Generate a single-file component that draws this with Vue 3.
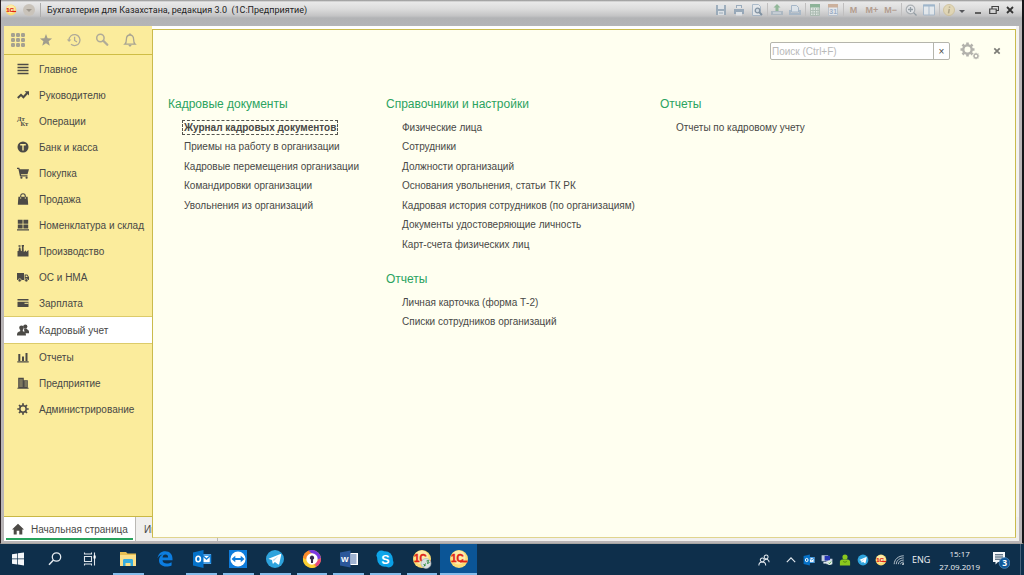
<script setup>
const tools = [
  { label: 'Меню функций', art: '<g fill="#a5a190"><rect x="1" y="1" width="4" height="4" rx="1.200"/><rect x="6" y="1" width="4" height="4" rx="1.200"/><rect x="11" y="1" width="4" height="4" rx="1.200"/><rect x="1" y="6" width="4" height="4" rx="1.200"/><rect x="6" y="6" width="4" height="4" rx="1.200"/><rect x="11" y="6" width="4" height="4" rx="1.200"/><rect x="1" y="11" width="4" height="4" rx="1.200"/><rect x="6" y="11" width="4" height="4" rx="1.200"/><rect x="11" y="11" width="4" height="4" rx="1.200"/></g>' },
  { label: 'Избранное', art: '<path fill="#a19d8d" d="M8 2l1.600 4.300 4.500.2-3.500 2.800 1.200 4.500L8 11.300l-3.800 2.500 1.200-4.500L1.900 6.500l4.500-.2z"/>' },
  { label: 'История', art: '<g fill="none" stroke="#b0ab98" stroke-width="1.300"><path d="M3 8.300A5.500 5.500 0 1 1 5 12.300"/><path d="M8.600 4.800v3.700l2.400 1.500"/></g><path fill="#b0ab98" d="M.8 7.400h4.600L3.100 10z"/>' },
  { label: 'Поиск', art: '<g fill="none" stroke="#b0ab98"><circle cx="6.400" cy="6" r="3.700" stroke-width="1.500"/><path d="M9.300 8.800l4 4" stroke-width="2.300" stroke-linecap="round"/></g>' },
  { label: 'Оповещения', art: '<path fill="none" stroke="#a8a492" stroke-width="1.300" d="M2.800 12.200h10.400c-1.400-1.300-1.600-2.300-1.600-5C11.600 4.500 10.200 3 8 3S4.400 4.500 4.400 7.200c0 2.700-.2 3.700-1.600 5z"/><path fill="#a8a492" d="M7.200 1.500h1.600V3H7.200zM6.500 13h3c-.2 1.200-.8 1.500-1.500 1.500S6.700 14.200 6.500 13z"/>' }
]

const sections = [
  { name: 'Главное', art: '<path d="M.5 1.500h11M.5 4.500h11M.5 7.500h11M.5 10.500h11" stroke="#4c4a46" stroke-width="1.300"/>' },
  { name: 'Руководителю', art: '<path d="M.8 9L4 5.800l2.400 2.400L10.200 4" fill="none" stroke="#4c4a46" stroke-width="2"/><path d="M7.600 2.200H12v4.400z"/>' },
  { name: 'Операции', art: '<text x="0" y="5.500" font-size="6.500" font-weight="700" font-family="Liberation Serif, serif">Дт</text><text x="3.500" y="11" font-size="6.500" font-weight="700" font-family="Liberation Serif, serif">Кт</text>' },
  { name: 'Банк и касса', art: '<circle cx="6" cy="6" r="5.500"/><path d="M3.200 3.800h5.600M6 4v5.500" stroke="#fbec9c" stroke-width="1.400"/>' },
  { name: 'Покупка', art: '<path d="M0 .8h2.300l.5 1.400H12l-1.500 5H4l.2 1h6.300v1.200H3L1.400 2H0z"/><circle cx="4.400" cy="10.700" r="1.100"/><circle cx="9.600" cy="10.700" r="1.100"/>' },
  { name: 'Продажа', art: '<path d="M1.400 3.800h9.200l.6 7.900H.8z"/><path d="M3.700 6V3.200C3.700 1.400 4.500.7 6 .7s2.300.7 2.300 2.500V6" fill="none" stroke="#4c4a46" stroke-width="1.100"/><path d="M3.700 4V6M8.300 4V6" stroke="#d8cb8c" stroke-width=".8"/>' },
  { name: 'Номенклатура и склад', art: '<path d="M.8.800h4.800v3.900H.8zM6.400.800h4.800v3.900H6.400zM.8 5.500h4.800v3.900H.8zM6.400 5.500h4.800v3.900H6.400zM0 10.200h12v1.400H0z"/>' },
  { name: 'Производство', art: '<path d="M.5 11.500V6h1l.4-3.500h1.500L4 6.200l.8-.4L5 1h1.500l.3 6L9 5.200V7l2.500-2v6.500z"/><path d="M1.500.2h2v1.500h-2zM4.700 0h2.300v1.500H4.700z"/>' },
  { name: 'ОС и НМА', art: '<path d="M0 2h7v7H0zM7.600 3.600h2.700L12 6v3H7.600z"/><path d="M8.600 4.500h1.300l.9 1.500H8.600z" fill="#fbec9c"/><circle cx="2.700" cy="9.300" r="1.600" stroke="#fbec9c" stroke-width=".6"/><circle cx="9.300" cy="9.300" r="1.600" stroke="#fbec9c" stroke-width=".6"/>' },
  { name: 'Зарплата', art: '<path d="M.5 2h11v1.600H.5zM.5 4.700h11V10H.5z"/><path d="M7.500 6.300h4" stroke="#fbec9c" stroke-width="1"/>' },
  { name: 'Кадровый учет', active: true, art: '<circle cx="8.300" cy="2.600" r="2.100"/><path d="M7 4.500h2.600c.2 1 2.400 1.300 2.400 3V9.300H7.500z"/><circle cx="4.500" cy="3.800" r="2.300"/><path d="M0 11.500C0 8.400.8 8.100 3.200 7.200V5h2.600v2.200c2.400.9 3.200 1.200 3.200 4.300z"/>' },
  { name: 'Отчеты', art: '<path d="M.3 10.300h11.400v1.200H.3zM1.300 3h2v7h-2zM5 5.500h2V10H5zM8.500 2h2v8h-2z"/>' },
  { name: 'Предприятие', art: '<path d="M1.200.8h5.600v2.400h4v7.600h.8v.9H.4v-.9h.8z"/><path d="M2.300 3h3.400M2.300 5h3.400M2.300 7h3.400M2.300 9h3.400M7.500 5h2.600M7.500 7h2.600M7.500 9h2.600" stroke="#d9cc8d" stroke-width=".7"/>' },
  { name: 'Администрирование', art: '<circle cx="6" cy="6" r="3.200" fill="none" stroke="#4c4a46" stroke-width="1.500"/><path d="M6 .3v2M6 9.700v2M.3 6h2M9.700 6h2M2 2l1.400 1.400M8.600 8.600L10 10M2 10l1.400-1.400M8.600 3.400L10 2" stroke="#4c4a46" stroke-width="1.700"/>' }
]

const columns = [
  [{ title: 'Кадровые документы', links: ['Журнал кадровых документов', 'Приемы на работу в организации', 'Кадровые перемещения организации', 'Командировки организации', 'Увольнения из организаций'] }],
  [
    { title: 'Справочники и настройки', links: ['Физические лица', 'Сотрудники', 'Должности организаций', 'Основания увольнения, статьи ТК РК', 'Кадровая история сотрудников (по организациям)', 'Документы удостоверяющие личность', 'Карт-счета физических лиц'] },
    { title: 'Отчеты', links: ['Личная карточка (форма Т-2)', 'Списки сотрудников организаций'] }
  ],
  [{ title: 'Отчеты', links: ['Отчеты по кадровому учету'] }]
]
const current = 'Журнал кадровых документов'

const commands = [
  [
    { label: 'Сохранить', art: '<path fill="#8fa3b5" d="M1 1h10v10H1z"/><path fill="#dfe5ea" d="M3 1h6v4H3zM3 7h6v4H3z"/><path fill="#8fa3b5" d="M4 8.500h4v1H4z"/>' },
    { label: 'Печать', art: '<path fill="#8a9fb3" d="M1 5h10v5H1zM3 1h6v3H3z"/><path fill="#e3e8ec" d="M3 8h6v3.500H3zM4 2h4v2H4z"/>' },
    { label: 'Просмотр', art: '<path fill="#e6eaee" stroke="#9fb2c4" d="M1.500.5h6l2 2v9h-8z"/><circle cx="6.500" cy="6.500" r="2.300" fill="#cfdae4" stroke="#6f8497" stroke-width="1.300"/><path d="M8 8l3 3" stroke="#6f8497" stroke-width="1.800"/>' }
  ],
  [
    { label: 'Загрузить', art: '<path fill="#a5b3bf" d="M0 7h12v4H0z"/><path fill="#7fae88" d="M6 0l3.500 3.500H7.500V7h-3V3.500h-2z"/><path fill="#e1e6ea" d="M2 8.500h8v1H2z"/>' },
    { label: 'Получить', art: '<path fill="#dde5ec" stroke="#98adc2" d="M2.500 1.500h5l2 2V8h-7z"/><path fill="#a1b4c6" d="M0 6h2v3h8V6h2v5H0z"/>' }
  ],
  [
    { label: 'Калькулятор', art: '<path fill="#dfe9e2" stroke="#a5b8ac" d="M1.500.5h9v11h-9z"/><path fill="#78a886" d="M1 0h10v3.500H1z"/><path stroke="#a5b8ac" d="M4 4v7M6.500 4v7M9 4v7M1 6.500h10M1 9h10"/>' },
    { label: 'Календарь', art: '<path fill="#e7ebef" stroke="#b5c0cc" d="M1.500 1.500h9v10h-9z"/><path fill="#c6a58c" d="M1 0h10v3.500H1z"/><text x="2.300" y="10.200" font-size="7" font-weight="700" fill="#8fa6c4" font-family="Liberation Sans, sans-serif">31</text>' }
  ],
  [{ label: 'M', text: 'M' }, { label: 'M+', text: 'M+' }, { label: 'M-', text: 'M−' }],
  [
    { label: 'Масштаб', art: '<circle cx="5.500" cy="5.500" r="4.300" fill="#e4e7ea" stroke="#a0a6ab" stroke-width="1.200"/><path stroke="#84919a" stroke-width="1.300" d="M3 5.500h5M5.500 3v5M8.600 8.600L11.500 11.500"/>' },
    { label: 'Окна', art: '<path fill="#e6ecf1" stroke="#9fb4c8" d="M.5 1h11v10H.5zM6 1v10"/><path fill="#8facc6" d="M0 .5h12v2H0z"/>' }
  ]
]

const oneC = '<circle cx="10" cy="10" r="9" fill="#fbdc74"/><circle cx="9.500" cy="8.500" r="7" fill="#fff0b5" opacity=".8"/><text x="2" y="13.200" font-size="10" font-weight="700" fill="#e02416" stroke="#e02416" stroke-width=".4" font-family="Liberation Sans, sans-serif">1С</text><path d="M11 12.500h7.500" stroke="#e02416" stroke-width="1.900"/>'
const telegram = '<circle cx="10" cy="10" r="9" fill="#2ea3dc"/><path fill="#fff" d="M3.600 9.800L15.400 5c.6-.2 1 .2.8.9l-2 9c-.2.7-.7.8-1.300.4l-3-2.200-1.500 1.500c-.4.3-.7.2-.8-.3l-.6-3.200-3.200-1z"/><path d="M7.500 11l6-4-4.500 5z" fill="#b9dcee"/>'
const outlook = '<path fill="#fff" d="M10 5h9v10h-9z"/><path d="M10 6h8.500v8H10" fill="none" stroke="#1683dc" stroke-width="1.500"/><path d="M11 7l3.500 3L18 7" fill="none" stroke="#1683dc" stroke-width="1.500"/><path fill="#0572c9" d="M1 3.500L11.500 1v18L1 16.500z"/><ellipse cx="6.200" cy="10" rx="2.200" ry="2.700" fill="none" stroke="#fff" stroke-width="1.600"/>'

const apps = [
  { label: 'Пуск', art: '<path fill="#f4f7fa" d="M4 5.200L9.300 4.400v5.100H4zM10 4.300l6-.9v6.100h-6zM4 10.300h5.300v5.200L4 14.700zM10 10.300h6v6.100l-6-.9z"/>' },
  { label: 'Поиск', art: '<circle cx="11.500" cy="8" r="4.200" fill="none" stroke="#e5ebf0" stroke-width="1.300"/><path d="M8.500 11L4 15.800" stroke="#e5ebf0" stroke-width="1.500"/>' },
  { label: 'Представление задач', art: '<g fill="none" stroke="#dfe6ec" stroke-width="1.100"><path d="M2.500 7.500h7v5h-7zM2.500 3.500V5h7V3.500M2.500 16.500V15h7v1.500M12.500 3.500v13"/></g><path fill="#fff" d="M11.500 6.500h2.200v3h-2.200z"/>' },
  { label: 'Проводник', open: true, art: '<path fill="#e8bf52" d="M2 3h6l1.500 1.500H18V17H2z"/><path fill="#fbe08a" d="M2 6h16v11H2z"/><path fill="#38aee0" d="M5 17v-5.500C5 10.500 5.500 10 6.500 10h7c1 0 1.500.5 1.500 1.500V17h-2.500v-3h-5v3z"/>' },
  { label: 'Edge', art: '<path fill="#0c7de0" d="M2.500 9.200C3.300 4.700 6.200 2.200 10.200 2.200c4.700 0 7.300 3.200 7.300 7.600v1.500H7.500c.2 2.300 2 3.300 4.300 3.300 1.800 0 3.400-.5 4.800-1.300v3.200c-1.600.8-3.300 1.100-5.300 1.100-4.400 0-7.300-2.400-7.300-6.300 0-2.600 1.400-4.600 3.700-5.800-2.600.3-4.200 1.700-5.200 3.700zm5.100-.8h5.500c0-1.900-.7-3-2.600-3S7.800 6.600 7.600 8.400z"/>' },
  { label: 'Outlook', open: true, art: outlook },
  { label: 'TeamViewer', open: true, art: '<rect x="1" y="1" width="18" height="18" fill="#0e7cdc"/><circle cx="10" cy="10" r="7.600" fill="#fff"/><path fill="#0e7cdc" d="M3.500 10L7.300 6.800V9h5.400V6.800l3.800 3.200-3.800 3.200V11H7.300v2.200z"/>' },
  { label: 'Telegram', open: true, art: telegram },
  { label: 'Браузер', open: true, art: '<circle cx="10" cy="10" r="9" fill="#f5a623"/><path fill="#7a35e0" d="M6 2a9 9 0 0 1 12.900 7L15 11l-4-6z"/><path fill="#e5487f" d="M18.900 9a9 9 0 0 1-5 9L13 14z"/><path fill="#fb8b2b" d="M1 9a9 9 0 0 1 6-7.500L9 6 4 11z"/><path fill="#fbcf33" d="M1 9a9 9 0 0 0 13 9l-8-7z"/><circle cx="10" cy="10" r="5.700" fill="#fff"/><path fill="#352a4c" d="M10 6.500a2.200 2.200 0 0 1 1.100 4.100L11 14H9l-.1-3.400A2.200 2.200 0 0 1 10 6.500z"/>' },
  { label: 'Word', open: true, art: '<path fill="#fff" d="M11 4h8v12h-8z"/><path d="M12 6h5.500M12 8h5.500M12 10h5.500M12 12h5.500M12 14h5.500" stroke="#2b579a" stroke-width=".9"/><path fill="#2b579a" d="M1 3.500L11.500 1.500v17L1 16.500z"/><text x="2" y="13" font-size="8" font-weight="700" fill="#fff" font-family="Liberation Sans, sans-serif">W</text>' },
  { label: 'Skype', open: true, art: '<circle cx="10" cy="10" r="7.800" fill="#0ea5e9"/><circle cx="6.300" cy="6.300" r="4.800" fill="#0ea5e9"/><circle cx="13.700" cy="13.700" r="4.800" fill="#0aa0e6"/><text x="6.200" y="14.500" font-size="12.500" font-weight="700" fill="#fff" font-family="Liberation Sans, sans-serif">S</text>' },
  { label: '1С:Предприятие', open: true, art: oneC + '<circle cx="14" cy="14.500" r="5" fill="#d9dfe0" stroke="#a5aeb1" stroke-width=".6"/><path d="M11.500 15l2 2M12 17.500l1.500-3M14.500 12l2-.5-1 3 2-1" stroke="#2c8b3c" stroke-width="1" fill="none"/>' },
  { label: '1С:Бухгалтерия', open: true, active: true, art: oneC }
]

const tray = [
  { label: 'Показать скрытые значки', art: '<path d="M3 13.500l7-7 7 7" fill="none" stroke="#e5ebf0" stroke-width="1.900"/>' },
  { label: 'Outlook', art: outlook },
  { label: 'Сеть', art: '<path fill="#c3cede" d="M1 2h11v10H1zM9 8h10v9H9z"/><path fill="#2636b5" d="M6 3h9v8H6z"/><path fill="#dfe6ee" d="M4 13h10v3H4z"/><circle cx="14.500" cy="14.500" r="4" fill="#e6efe6"/><path d="M12.500 14.500l1.500 1.500 3-3.500" fill="none" stroke="#2e9641" stroke-width="1.300"/>' },
  { label: 'Агент', art: '<circle cx="10" cy="5" r="4.300" fill="#8bc81e"/><path fill="#8bc81e" d="M1.500 19v-6c0-2.500 1.500-4 4-4h9c2.500 0 4 1.500 4 4v6z"/><path d="M7 12.500q3 2.500 6 0" stroke="#426f0d" stroke-width="1.200" fill="none"/>' },
  { label: 'Telegram', art: telegram },
  { label: '1С', art: oneC },
  { label: 'Wi-Fi', art: '<g fill="none" stroke="#dfe6ec" stroke-width="1.300"><path d="M2 17C2 9 9 3 18 3M5.500 17c0-6 5.500-10.500 12.500-10.500M9 17c0-4 4-7 9-7M12.500 17c0-2 2.500-3.500 5.500-3.500"/></g><path fill="#fff" d="M15 18a3 3 0 0 1 3-3v3z"/>' }
]
</script>

<template>
  <div class="desktop">
    <div class="window">
      <header class="titlebar">
        <svg class="logo" viewBox="0 0 20 20" v-html="oneC"></svg>
        <button class="round" aria-label="Главное меню"><svg viewBox="0 0 12 12"><circle cx="6" cy="6" r="6" fill="#c9c3ba" /><path fill="#9d978e" d="M3 5h6L6 8z" /></svg></button>
        <h1>Бухгалтерия для Казахстана, редакция 3.0&nbsp; (1С:Предприятие)</h1>
        <div class="commands">
          <div v-for="(group, i) in commands" :key="i" class="group">
            <button v-for="c in group" :key="c.label" :aria-label="c.label">
              <template v-if="c.text">{{ c.text }}</template>
              <svg v-else viewBox="0 0 12 12" v-html="c.art"></svg>
            </button>
          </div>
          <div class="group info">
            <button aria-label="О программе"><svg viewBox="0 0 12 12"><circle cx="6" cy="6" r="5.500" fill="#e3d6ae" stroke="#cdbf94" /><path d="M6.500 2.500v1.300M6.300 5L5.500 9.300" stroke="#a69a78" stroke-width="1.500" /></svg></button>
            <button class="more" aria-label="Еще"><svg viewBox="0 0 6 6"><path fill="#55565a" d="M0 3h6L3 6z" /></svg></button>
          </div>
          <div class="controls">
            <button aria-label="Свернуть"><svg viewBox="0 0 10 10"><path d="M2 8h6" stroke="#444" stroke-width="1.600" /></svg></button>
            <button aria-label="Восстановить"><svg viewBox="0 0 10 10"><path d="M3 3.500V1.500h6.500v4H7.500M.7 4h6.500v4.500H.7z" fill="none" stroke="#444" stroke-width="1.200" /></svg></button>
            <button aria-label="Закрыть"><svg viewBox="0 0 10 10"><path d="M2 2l6 6M8 2L2 8" stroke="#333" stroke-width="1.800" /></svg></button>
          </div>
        </div>
      </header>

      <div class="body">
        <aside class="sidebar">
          <div class="tools">
            <button v-for="t in tools" :key="t.label" :aria-label="t.label"><svg viewBox="0 0 16 16" v-html="t.art"></svg></button>
          </div>
          <nav>
            <a v-for="s in sections" :key="s.name" href="#" :class="{ active: s.active }">
              <svg viewBox="0 0 12 12" v-html="s.art"></svg>{{ s.name }}
            </a>
          </nav>
        </aside>
        <div class="tabs">
          <a class="tab selected" href="#"><svg viewBox="0 0 12 12"><path fill="#4c4a46" d="M6 .8l6 5.600h-1.700v5H7.300V7.800H4.700v3.600h-3v-5H0z" /></svg><span>Начальная страница</span></a>
          <a class="tab" href="#">Информация</a>
        </div>

        <main class="panel">
          <div class="searchbar">
            <div class="search">
              <input type="text" aria-label="Поиск" placeholder="Поиск (Ctrl+F)">
              <button aria-label="Очистить">×</button>
            </div>
            <button class="gear" aria-label="Настройки">
              <svg viewBox="0 0 20 18"><g fill="none" stroke="#b3b2ac"><circle cx="7.500" cy="7.500" r="4.200" stroke-width="2.400" /><path d="M7.500 .5v2.500M7.500 12v2.500M.5 7.500H3M12 7.500h2.500M2.500 2.500l1.800 1.800M10.700 10.700l1.800 1.800M2.500 12.500l1.800-1.800M10.700 4.300l1.800-1.800" stroke-width="2.600" /><circle cx="16" cy="14" r="1.900" stroke-width="1.300" /><path d="M16 10.800v1.300M16 16v1.300M12.800 14h1.300M18 14h1.300M13.700 11.700l1 1M17.400 15.400l1 1M13.700 16.300l1-1M17.400 12.600l1-1" stroke-width="1.200" /></g></svg>
            </button>
            <button class="close" aria-label="Закрыть"><svg viewBox="0 0 8 8"><path d="M1.300 1.300l5.400 5.400M6.700 1.300L1.300 6.700" stroke="#7c7c76" stroke-width="1.700" /></svg></button>
          </div>
          <div class="columns">
            <div v-for="(col, i) in columns" :key="i" class="column">
              <section v-for="g in col" :key="g.title">
                <h2>{{ g.title }}</h2>
                <ul>
                  <li v-for="l in g.links" :key="l"><a href="#" :class="{ current: l === current }">{{ l }}</a></li>
                </ul>
              </section>
            </div>
          </div>
        </main>
      </div>
    </div>

    <footer class="taskbar">
      <div class="apps">
        <button v-for="a in apps" :key="a.label" :aria-label="a.label" :class="{ open: a.open, active: a.active }"><svg viewBox="0 0 20 20" v-html="a.art"></svg></button>
      </div>
      <div class="tray">
        <button class="people" aria-label="Люди"><svg viewBox="0 0 14 14"><g fill="none" stroke="#e5ebf0" stroke-width="1.200"><circle cx="9.500" cy="3.500" r="2.300" /><path d="M7.500 7.300c2-2 5.500-1 5.500 2.200" /><circle cx="5" cy="7" r="2.300" /><path d="M1 13.500c0-5.400 8-5.400 8 0" /></g></svg></button>
        <button v-for="t in tray" :key="t.label" :aria-label="t.label"><svg viewBox="0 0 20 20" v-html="t.art"></svg></button>
        <button class="lang">ENG</button>
        <div class="clock"><time>15:17</time><time>27.09.2019</time></div>
        <button class="notes" aria-label="Уведомления">
          <svg viewBox="0 0 18 18"><path fill="#f4f7fa" d="M1 1h12v10H6l-2.500 2.500V11H1z" /><path d="M3 3.800h8M3 6h8M3 8.200h8" stroke="#0e2d49" stroke-width=".9" /><circle cx="12.500" cy="12" r="5.400" fill="#0f5899" stroke="#5b8fbd" stroke-width=".7" /><text x="10.200" y="15" font-size="8.500" font-weight="700" fill="#fff" font-family="Open Sans, sans-serif">3</text></svg>
        </button>
      </div>
    </footer>
  </div>
</template>

<style>
body {
  background: #0e2d49;
}
</style>

<style scoped>
* {
  box-sizing: border-box;
}
.desktop {
  height: 100vh;
  display: flex;
  flex-direction: column;
  font-family: "Liberation Sans", Arial, sans-serif;
  font-size: 10px;
  color: #484846;
  overflow: hidden;
}
button {
  border: 0;
  padding: 0;
  margin: 0;
  background: none;
  font: inherit;
  color: inherit;
  display: flex;
  align-items: center;
  justify-content: center;
}
a {
  color: inherit;
  text-decoration: none;
}
svg {
  display: block;
  flex: none;
}
.window {
  flex: 1;
  min-height: 0;
  display: flex;
  flex-direction: column;
  border-left: 1px solid #2b2226;
  border-right: 2px solid #141518;
  border-bottom: 1px solid #a7a4a1;
  background: #b9b5b6;
  padding: 0 3px 2px;
}
.titlebar {
  height: 26px;
  margin: 0 -3px;
  padding: 0 7px 6px 4px;
  display: flex;
  align-items: center;
  background: linear-gradient(#8e8e8e 0, #e9e9e9 2px, #dcdcdc 9px, #c3c3c4 16px, #b2b3b5 18px, #b4b5b7 26px);
}
.logo {
  width: 12px;
  height: 12px;
}
.round {
  margin-left: 6px;
  padding-right: 5px;
  border-right: 1px solid #adadad;
  height: 14px;
}
.round svg {
  width: 12px;
  height: 12px;
}
h1 {
  margin: 0 0 0 6px;
  font-family: Roboto, "Liberation Sans", sans-serif;
  font-size: 9px;
  font-weight: 400;
  color: #1d1d1d;
  white-space: nowrap;
}
.commands {
  margin-left: auto;
  display: flex;
  align-items: center;
}
.group {
  display: flex;
  gap: 6px;
  padding: 0 4px 0 3px;
  border-left: 1px solid #c0bfbf;
}
.group:first-child {
  border-left: 0;
}
.group button {
  min-width: 12px;
  height: 14px;
  font-size: 9px;
  font-weight: 700;
  color: #b39d8f;
}
.group svg {
  width: 12px;
  height: 12px;
  opacity: 0.8;
}
.group .more {
  min-width: 6px;
}
.group .more svg {
  width: 6px;
  height: 6px;
  opacity: 1;
}
.info {
  gap: 4px;
}
.controls {
  display: flex;
  gap: 6px;
  margin-left: 4px;
}
.controls svg {
  width: 10px;
  height: 10px;
}
.body {
  flex: 1;
  min-height: 0;
  position: relative;
  display: flex;
  flex-direction: column;
  background: #f4f3f1;
}
.sidebar {
  flex: 1;
  width: 149px;
  background: #fbec9c;
  border-bottom: 1px solid #c9b845;
}
.tools {
  height: 29px;
  display: flex;
  align-items: center;
  gap: 12px;
  padding-left: 6px;
  border-bottom: 1px solid #cfbd45;
}
.tools svg {
  width: 16px;
  height: 16px;
}
nav {
  padding-top: 1px;
}
nav a {
  display: flex;
  align-items: center;
  gap: 10px;
  height: 26px;
  padding-left: 13px;
  white-space: nowrap;
}
nav a.active {
  height: 28px;
  background: #fff;
  border: solid #dccb6a;
  border-width: 1px 0;
}
nav svg {
  width: 12px;
  height: 12px;
  fill: #4c4a46;
  overflow: visible;
}
.tabs {
  height: 24px;
  display: flex;
  background: #f0efed;
}
.tab {
  display: flex;
  align-items: center;
  gap: 7px;
  padding: 0 8px;
  width: 82px;
  border-right: 1px solid #bab8b4;
}
.tab.selected {
  width: 132px;
  background: linear-gradient(#27a25c, #27a25c) 2px 21px / 127px 2px no-repeat #fff;
  white-space: nowrap;
}
.tab svg {
  width: 12px;
  height: 12px;
}
.panel {
  position: absolute;
  inset: 3px 3px 3px 148px;
  background: #fffff0;
  border: 1px solid #cabb4c;
  border-bottom-color: #e0d48e;
  box-shadow: 0 -3px 0 #fff;
}
.searchbar {
  display: flex;
  align-items: center;
  justify-content: flex-end;
  padding: 12px 14px 0 0;
}
.search {
  display: flex;
  width: 180px;
  height: 18px;
  border: 1px solid #b5b5ac;
  border-radius: 2px;
  background: #fff;
}
.search input {
  flex: 1;
  min-width: 0;
  border: 0;
  padding: 0 1px;
  background: none;
  font: inherit;
  outline: 0;
}
.search input::placeholder {
  color: #b9b9b9;
  opacity: 1;
}
.search button {
  width: 16px;
  border-left: 1px solid #b5b5ac;
}
.gear {
  margin-left: 10px;
}
.gear svg {
  width: 20px;
  height: 18px;
}
.close {
  margin-left: 13px;
}
.close svg {
  width: 8px;
  height: 8px;
}
.columns {
  display: grid;
  grid-template-columns: 218px 274px 1fr;
  padding: 36px 15px 0;
  white-space: nowrap;
}
.column {
  display: flex;
  flex-direction: column;
  gap: 17px;
}
h2 {
  margin: 0 0 5px;
  font-size: 12px;
  line-height: 16px;
  font-weight: 400;
  color: #2ba35f;
}
ul {
  margin: 0;
  padding: 0 0 0 16px;
  list-style: none;
}
li {
  height: 20px;
  display: flex;
  align-items: center;
}
li:nth-child(even) {
  height: 19px;
}
.current {
  font-weight: 700;
  outline: 1px dashed #55554f;
  outline-offset: 1px;
}
.taskbar {
  height: 31px;
  display: flex;
  justify-content: space-between;
  background: #0e2f4b;
  color: #eef2f5;
  font-family: "Open Sans", "Noto Sans", sans-serif;
}
.apps {
  width: 477px;
  display: flex;
}
.apps button {
  flex: 1;
  border-bottom: 2px solid transparent;
  background-clip: padding-box;
  position: relative;
}
.apps button.open::after {
  content: "";
  position: absolute;
  inset: auto 3px -2px;
  height: 2px;
  background: #84bdeb;
}
.apps button.active {
  background: #0b5596;
}
.apps button.active::after {
  inset: auto 0 -2px;
}
.apps svg {
  width: 20px;
  height: 20px;
}
.tray {
  display: flex;
  align-items: center;
  gap: 6px;
  margin-right: 3px;
  padding-right: 10px;
  border-right: 1px solid #47617a;
}
.tray svg {
  width: 12px;
  height: 12px;
}
.tray .people {
  margin-right: 9px;
}
.lang {
  margin-left: 1px;
  font-size: 9px;
}
.clock {
  display: flex;
  flex-direction: column;
  align-items: center;
  font-size: 8px;
  line-height: 13px;
  margin: 0 6px 0 3px;
}
.tray .notes svg {
  width: 18px;
  height: 18px;
}
</style>
